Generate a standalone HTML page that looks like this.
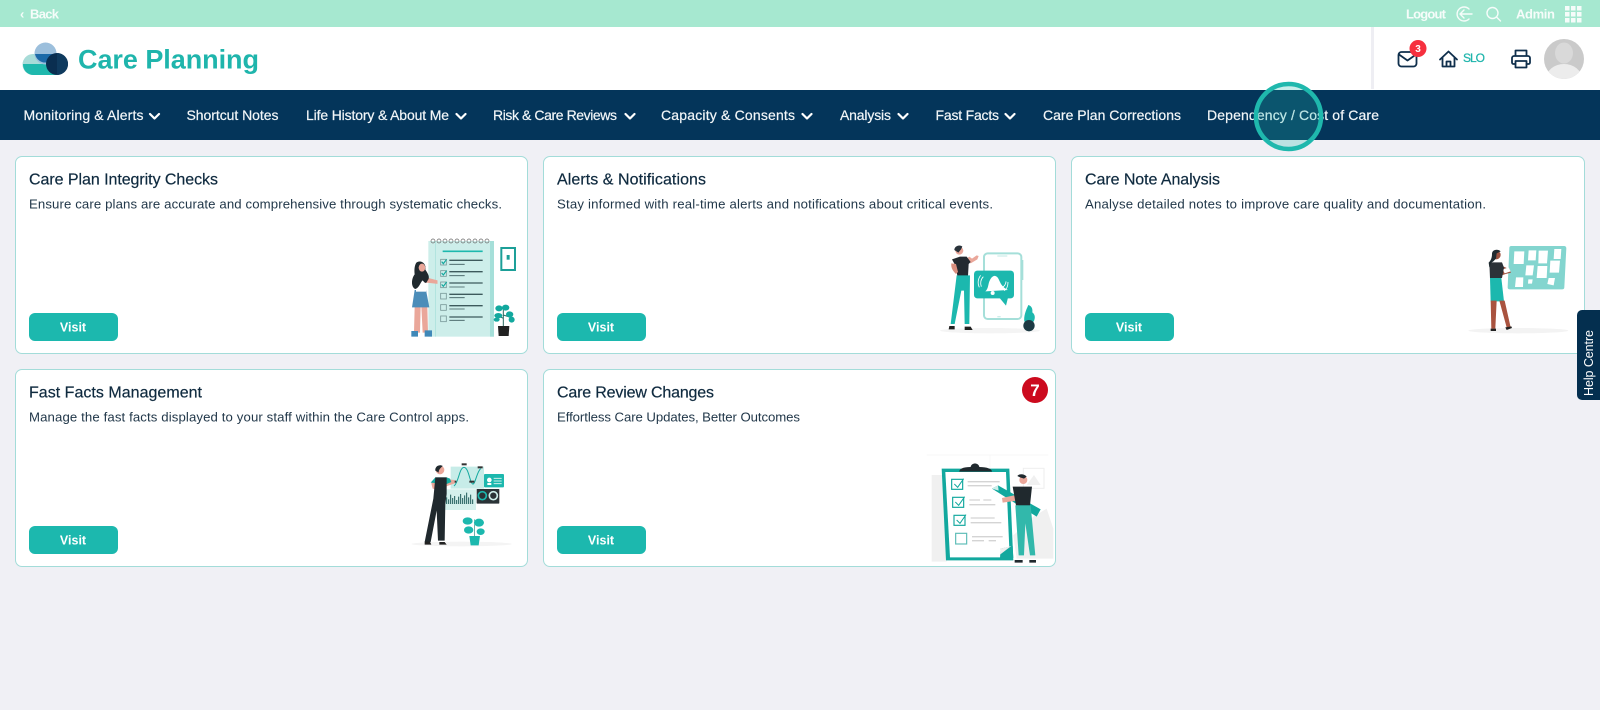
<!DOCTYPE html>
<html lang="en"><head><meta charset="utf-8"><title>Care Planning</title>
<style>
html,body{margin:0;padding:0;width:1600px;height:710px;overflow:hidden;background:#f0f0f5;font-family:"Liberation Sans",sans-serif}
.b{position:absolute}
.card{position:absolute;box-sizing:border-box;background:#fff;border:1px solid #a3dcd9;border-radius:7px}
.btn{position:absolute;width:89px;height:28px;background:#1cb8ae;border-radius:6px}
svg.o{position:absolute;left:0;top:0}
text{font-family:"Liberation Sans",sans-serif}
.nav{font-size:14px;fill:#f2f6f8;stroke:#f2f6f8;stroke-width:.2px}
.t{font-size:16px;fill:#0f2a3f;stroke:#0f2a3f;stroke-width:.2px}
.d{font-size:13.2px;fill:#22384a}
.v{font-size:12.5px;font-weight:700;fill:#fff}
.top{font-size:13px;font-weight:700;fill:#fff;opacity:.9}
</style></head><body>
<div class="b" style="left:0;top:0;width:1600px;height:27px;background:#a6e8d0"></div>
<div class="b" style="left:0;top:27px;width:1600px;height:63px;background:#fff"></div>
<div class="b" style="left:1371px;top:27px;width:3px;height:62px;background:#eeeef3"></div>
<div class="b" style="left:0;top:90px;width:1600px;height:50px;background:#04355a"></div>
<div class="card" style="left:15px;top:156px;width:513px;height:198px"></div>
<div class="card" style="left:543px;top:156px;width:513px;height:198px"></div>
<div class="card" style="left:1071px;top:156px;width:514px;height:198px"></div>
<div class="card" style="left:15px;top:369px;width:513px;height:198px"></div>
<div class="card" style="left:543px;top:369px;width:513px;height:198px"></div>
<div class="btn" style="left:29px;top:313px"></div>
<div class="btn" style="left:557px;top:313px"></div>
<div class="btn" style="left:1085px;top:313px"></div>
<div class="btn" style="left:29px;top:526px"></div>
<div class="btn" style="left:557px;top:526px"></div>
<div class="b" style="left:1577px;top:310px;width:23px;height:90px;background:#042f4f;border-radius:5px 0 0 5px"></div>

<svg class="o" width="1600" height="710" viewBox="0 0 1600 710" xmlns="http://www.w3.org/2000/svg">
<!-- top bar -->
<text class="top" x="20" y="18.500">‹</text>
<text class="top" x="30" y="18.500" textLength="29" lengthAdjust="spacing">Back</text>
<text class="top" x="1406" y="18.500" textLength="40" lengthAdjust="spacing">Logout</text>
<g fill="none" stroke="#fff" stroke-width="1.400" opacity=".9" stroke-linecap="round" stroke-linejoin="round">
<path d="M1469 9a7 7 0 1 0 0 10"/><path d="M1472 14h-11M1464 10l-4 4 4 4"/>
<circle cx="1492.500" cy="13" r="5.500"/><path d="M1497 17.500l3.500 3.500"/></g>
<text class="top" x="1516" y="18.500" textLength="39" lengthAdjust="spacing">Admin</text>
<g fill="#fff" opacity=".9">
<rect x="1565" y="6" width="4.500" height="4.500"/><rect x="1571" y="6" width="4.500" height="4.500"/><rect x="1577" y="6" width="4.500" height="4.500"/>
<rect x="1565" y="12" width="4.500" height="4.500"/><rect x="1571" y="12" width="4.500" height="4.500"/><rect x="1577" y="12" width="4.500" height="4.500"/>
<rect x="1565" y="18" width="4.500" height="4.500"/><rect x="1571" y="18" width="4.500" height="4.500"/><rect x="1577" y="18" width="4.500" height="4.500"/>
</g>

<!-- logo -->
<path d="M33 54h16v21H33a10.500 10.500 0 0 1 0-21z" fill="#a8dcd8"/>
<path d="M23 64H56v11H33a10.500 10.500 0 0 1-10-11z" fill="#1fb8ad"/>
<circle cx="45.500" cy="53.500" r="11" fill="#9cbfdc"/>
<path d="M35 54h21a11 11 0 0 1-4 8.500h-8.500A11 11 0 0 1 35 54z" fill="#1c6aa8"/>
<circle cx="57" cy="64" r="11" fill="#0a2e50"/>
<path d="M57 53a11 11 0 0 1 0 22z" fill="#0f3a5e"/>
<text x="78" y="68.500" font-size="27" font-weight="700" fill="#1fb5ac" textLength="181" lengthAdjust="spacing">Care Planning</text>

<!-- header icons -->
<g fill="none" stroke="#0f2f4c" stroke-width="1.800" stroke-linecap="round" stroke-linejoin="round">
<rect x="1398.500" y="52" width="18" height="14.500" rx="3"/><path d="M1399 54.500l8.500 6 8.500-6"/>
<path d="M1440 59.500l8.500-8 8.500 8M1442.500 57.500v9h12v-9M1446.500 66.500v-5h4v5"/>
<path d="M1515.500 56v-5.500h11V56M1515.500 64h-2a1.500 1.500 0 0 1-1.500-1.500V58a2 2 0 0 1 2-2h14a2 2 0 0 1 2 2v4.500a1.500 1.500 0 0 1-1.500 1.500h-2"/><rect x="1515.500" y="61" width="11" height="6.500"/>
</g>
<circle cx="1418" cy="48.500" r="8.500" fill="#f6303f"/>
<text x="1418" y="52" font-size="10" font-weight="700" fill="#fff" text-anchor="middle">3</text>
<text x="1463" y="62" font-size="12" fill="#1fb5ac" stroke="#1fb5ac" stroke-width=".25" textLength="22" lengthAdjust="spacing">SLO</text>
<clipPath id="av"><circle cx="1564" cy="59" r="20"/></clipPath>
<circle cx="1564" cy="59" r="20" fill="#cacaca"/>
<g clip-path="url(#av)"><ellipse cx="1564" cy="53" rx="9" ry="10.500" fill="#d9d9d9"/><ellipse cx="1564" cy="79" rx="18" ry="15" fill="#ececec"/></g>

<!-- nav -->
<text class="nav" x="23.500" y="120" textLength="120" lengthAdjust="spacing">Monitoring &amp; Alerts</text>
<text class="nav" x="186.500" y="120" textLength="92" lengthAdjust="spacing">Shortcut Notes</text>
<text class="nav" x="306" y="120" textLength="143" lengthAdjust="spacing">Life History &amp; About Me</text>
<text class="nav" x="493" y="120" textLength="124" lengthAdjust="spacing">Risk &amp; Care Reviews</text>
<text class="nav" x="661" y="120" textLength="134" lengthAdjust="spacing">Capacity &amp; Consents</text>
<text class="nav" x="840" y="120" textLength="51" lengthAdjust="spacing">Analysis</text>
<text class="nav" x="935.500" y="120" textLength="63.500" lengthAdjust="spacing">Fast Facts</text>
<text class="nav" x="1043" y="120" textLength="138" lengthAdjust="spacing">Care Plan Corrections</text>
<text class="nav" x="1207" y="120" textLength="172" lengthAdjust="spacing">Dependency / Cost of Care</text>
<g fill="none" stroke="#fff" stroke-width="2.200" stroke-linecap="round" stroke-linejoin="round">
<path d="M150 114l4.500 4.500 4.500-4.500M456.500 114l4.500 4.500 4.500-4.500M625.500 114l4.500 4.500 4.500-4.500M802.500 114l4.500 4.500 4.500-4.500M898.500 114l4.500 4.500 4.500-4.500M1005.500 114l4.500 4.500 4.500-4.500"/></g>
<circle cx="1288.500" cy="116.500" r="32.500" fill="rgba(31,184,173,.25)" stroke="#1fb8ad" stroke-width="4.500"/>

<!-- card text -->
<text class="t" x="29" y="184.500" textLength="189" lengthAdjust="spacing">Care Plan Integrity Checks</text>
<text class="d" x="29" y="208.500" textLength="473" lengthAdjust="spacing">Ensure care plans are accurate and comprehensive through systematic checks.</text>
<text class="v" x="73" y="331.500" text-anchor="middle">Visit</text>
<text class="t" x="557" y="184.500" textLength="149" lengthAdjust="spacing">Alerts &amp; Notifications</text>
<text class="d" x="557" y="208.500" textLength="436" lengthAdjust="spacing">Stay informed with real-time alerts and notifications about critical events.</text>
<text class="v" x="601" y="331.500" text-anchor="middle">Visit</text>
<text class="t" x="1085" y="184.500" textLength="135" lengthAdjust="spacing">Care Note Analysis</text>
<text class="d" x="1085" y="208.500" textLength="401" lengthAdjust="spacing">Analyse detailed notes to improve care quality and documentation.</text>
<text class="v" x="1129" y="331.500" text-anchor="middle">Visit</text>
<text class="t" x="29" y="397.500" textLength="173" lengthAdjust="spacing">Fast Facts Management</text>
<text class="d" x="29" y="421.500" textLength="440" lengthAdjust="spacing">Manage the fast facts displayed to your staff within the Care Control apps.</text>
<text class="v" x="73" y="544.500" text-anchor="middle">Visit</text>
<text class="t" x="557" y="397.500" textLength="157" lengthAdjust="spacing">Care Review Changes</text>
<text class="d" x="557" y="421.500" textLength="243" lengthAdjust="spacing">Effortless Care Updates, Better Outcomes</text>
<text class="v" x="601" y="544.500" text-anchor="middle">Visit</text>
<circle cx="1035" cy="390" r="13" fill="#cc0a1e"/>
<text x="1035" y="396" font-size="17" font-weight="700" fill="#fff" text-anchor="middle">7</text>
<text transform="translate(1593,396) rotate(-90)" font-size="12.500" fill="#fff" textLength="66" lengthAdjust="spacing">Help Centre</text>

<!-- illustration 1 -->
<g transform="translate(390,225) scale(.3333)">
<rect x="115" y="48" width="197" height="287" fill="#cdeeea"/><rect x="300" y="48" width="12" height="287" fill="#a5dfd9"/>
<path d="M136 48v287" stroke="#a5dfd9" stroke-width="2"/>
<g fill="none" stroke="#666" stroke-width="2"><circle cx="129" cy="48" r="6"/><circle cx="147" cy="48" r="6"/><circle cx="165" cy="48" r="6"/><circle cx="183" cy="48" r="6"/><circle cx="201" cy="48" r="6"/><circle cx="219" cy="48" r="6"/><circle cx="237" cy="48" r="6"/><circle cx="255" cy="48" r="6"/><circle cx="273" cy="48" r="6"/><circle cx="291" cy="48" r="6"/></g>
<path d="M158 79h120" stroke="#1cb8ae" stroke-width="5"/>
<g fill="none" stroke="#7a9a9a" stroke-width="2.500">
<rect x="152" y="103" width="17" height="17"/><rect x="152" y="137" width="17" height="17"/><rect x="152" y="171" width="17" height="17"/><rect x="152" y="205" width="17" height="17"/><rect x="152" y="239" width="17" height="17"/><rect x="152" y="273" width="17" height="17"/></g>
<path d="M155 110l5 6 10-13M155 144l5 6 10-13M155 178l5 6 10-13" fill="none" stroke="#12a89e" stroke-width="3.500"/>
<g stroke="#3d5a5c" stroke-width="4"><path d="M178 106h100M178 140h100M178 174h100M178 208h100M178 242h100M178 276h100"/></g>
<g stroke="#3d5a5c" stroke-width="2.500"><path d="M178 118h46M178 152h46M178 186h46M178 218h46M178 252h46M178 286h46"/></g>
<rect x="334" y="69" width="41" height="66" fill="#fff" stroke="#1c9f98" stroke-width="6"/><rect x="350" y="90" width="9" height="14" fill="#1c9f98"/>
<path d="M340 304v-50M340 280l-20-10M340 270l24 8" stroke="#2a6a60" stroke-width="3" fill="none"/>
<g fill="#12a89e"><ellipse cx="327" cy="250" rx="11" ry="9"/><ellipse cx="347" cy="248" rx="11" ry="9"/><ellipse cx="325" cy="272" rx="12" ry="8"/><ellipse cx="359" cy="268" rx="11" ry="9"/><ellipse cx="365" cy="284" rx="9" ry="9"/><ellipse cx="320" cy="284" rx="9" ry="6"/></g>
<path d="M324 303h34l-2 30h-30z" fill="#222"/>
<!-- person -->
<path d="M74 245h18l-2 78H72zM94 245h18l2 78h-16z" fill="#eaa79a"/>
<path d="M64 318h20v17H64zM104 316h22v19h-22z" fill="#3f88b8"/>
<path d="M74 195h34l10 52H66z" fill="#4b8db9"/>
<path d="M78 150h30v50H78z" fill="#fff"/>
<path d="M106 170l34 4v-6l-30-8z" stroke="#eaa79a" stroke-width="5" fill="#eaa79a"/>
<path d="M80 112c14-8 30 4 26 22 8 12 16 24 6 34-4 12-10 2-14-2-6 4-10 22-22 26-14-6-12-32-2-44-2-14 0-30 6-36z" fill="#20292e"/>
<ellipse cx="96" cy="128" rx="10" ry="12" fill="#eaa79a"/>
</g>

<!-- illustration 2 -->
<g transform="translate(920,230) scale(.3333)">
<ellipse cx="210" cy="302" rx="150" ry="8" fill="#f4f4f4"/>
<rect x="192" y="70" width="112" height="197" rx="11" fill="#fff" stroke="#a5dfd9" stroke-width="6"/>
<path d="M308 90v60" stroke="#a5dfd9" stroke-width="4"/>
<path d="M232 78h30M232 260h10" stroke="#cdeeea" stroke-width="4"/>
<rect x="162" y="122" width="120" height="83" rx="10" fill="#1cb8ae"/><path d="M238 203h26l-6 24z" fill="#1cb8ae"/>
<path d="M196 184c10-8 8-24 14-34 4-8 10-14 16-12 8 2 10 10 14 18 4 10 14 20 24 24z" fill="#fff"/><circle cx="218" cy="189" r="6" fill="#fff"/>
<g fill="none" stroke="#fff" stroke-width="2.500"><path d="M190 140c-8 8-10 20-6 30M182 136c-8 10-10 24-4 36M246 172c8-2 12-12 12-18M252 182c8-4 12-14 12-26"/></g>
<path d="M140 86l12 14 20-12 4-10-6-2-14 10-8-6z" fill="#eaa79a"/>
<path d="M96 88l24-8h20l12 16-6 6-2 36h-32L108 110z" fill="#232a30"/>
<path d="M94 100c-2 14 6 24 14 32l6-6-6-24z" fill="#d98f7f"/>
<path d="M110 136h40l-2 146h-14l-2-100-8 0-20 100H92z" fill="#1cb8ae"/>
<circle cx="118" cy="62" r="12" fill="#eaa79a"/><path d="M103 60c0-12 16-18 24-10l-4 8-8 10z" fill="#29323a"/>
<path d="M88 288h16v10H86zM134 290h18l6 10h-24z" fill="#222"/>
<path d="M325 225c8 2 14 10 12 22 8 6 10 16 4 28h-28c-2-18 4-32 12-50z" fill="#1cb8ae"/><circle cx="327" cy="287" r="17" fill="#1d3a44"/>
</g>

<!-- illustration 3 -->
<g transform="translate(1450,230) scale(.3333)">
<ellipse cx="205" cy="302" rx="150" ry="8" fill="#f3f3f3"/>
<path d="M184 48h158q7 0 7 7l-6 117q0 6-7 6H180q-7 0-7-6l5-118q0-6 6-6z" fill="#83d5cf"/>
<g fill="#fff"><path d="M193 64h30l-2 38h-30zM236 61h23l-2 30h-23zM266 62h28l-3 38h-26zM313 57h21l-2 30h-21zM229 106h23l-4 30h-22zM263 108h29l-2 36h-30zM301 92h29l-3 36h-28zM198 142h22l-1 29h-24zM235 148h13l-2 13h-12zM296 144h19l-4 22-19-4z"/></g>
<path d="M145 115l16-5 18 8 4 10-16 4-12 4z" fill="#9b5240"/><path d="M158 118l18-6 6 12-18 6z" fill="#fff"/>
<path d="M118 97h38l6 16-6 31h-36z" fill="#2c3238"/>
<path d="M120 144h34l8 70h-40z" fill="#1cb8ae"/>
<path d="M122 212h18l-4 84h-12zM148 212h16l18 80h-12z" fill="#a9533f"/>
<path d="M122 296h16v7h-16zM166 292l18-3 2 5-16 6z" fill="#222"/>
<circle cx="139" cy="75" r="13" fill="#9b5240"/><path d="M126 72c0-14 18-16 26-8l-12 6-2 16-8 8-6 4-6 14-2-14c6-6 10-14 10-26z" fill="#1f2a30"/>
</g>

<!-- illustration 4 -->
<g transform="translate(410,450) scale(.3333)">
<ellipse cx="155" cy="282" rx="150" ry="7" fill="#f4f4f4"/>
<path d="M122 50h100v66h-100z" fill="#c7ece8"/>
<path d="M132 108c14-10 16-56 30-56s18 48 26 50 12-36 24-46" fill="none" stroke="#12a89e" stroke-width="3"/>
<rect x="155" y="40" width="15" height="6" fill="#333"/><rect x="203" y="49" width="15" height="6" fill="#333"/><rect x="178" y="92" width="15" height="6" fill="#333"/><rect x="124" y="92" width="15" height="6" fill="#333"/>
<rect x="222" y="72" width="60" height="40" rx="3" fill="#1cb8ae"/><circle cx="238" cy="90" r="7" fill="#fff"/><rect x="232" y="99" width="12" height="6" fill="#fff"/><path d="M251 85h24M251 93h24M251 101h24" stroke="#cdeeea" stroke-width="3"/>
<rect x="105" y="118" width="93" height="62" fill="#d4f0ec"/>
<path d="M110 162v-20M116 162v-14M122 162v-28M128 162v-18M134 162v-24M140 162v-12M146 162v-22M152 162v-30M158 162v-18M164 162v-26M170 162v-34M176 162v-20M182 162v-28M188 162v-14" stroke="#1d5a58" stroke-width="3"/>
<rect x="200" y="117" width="68" height="44" rx="2" fill="#2a3337"/><circle cx="217" cy="137" r="12" fill="none" stroke="#1cb8ae" stroke-width="5"/><circle cx="250" cy="137" r="12" fill="none" stroke="#cdeeea" stroke-width="5"/>
<path d="M194 268v-60" stroke="#2a8a80" stroke-width="2"/>
<g fill="#1cb8ae"><ellipse cx="173" cy="213" rx="15" ry="11"/><ellipse cx="207" cy="218" rx="15" ry="12"/><ellipse cx="176" cy="240" rx="14" ry="11"/><ellipse cx="212" cy="245" rx="12" ry="10"/></g>
<path d="M178 258h32l-4 28h-24z" fill="#1cb8ae"/>
<path d="M64 100l14-12 36 0 20 2v10l-22 8-26 12-18-4z" fill="#eaa79a"/>
<path d="M62 98l14-16h34l10 4 4 10-14 6z" fill="#12a89e"/>
<path d="M76 82h34v50l-4 30-2 110H84l-4-90-18 94H44l26-130z" fill="#20292e"/>
<circle cx="90" cy="60" r="13" fill="#eaa79a"/><path d="M76 62c-2-14 14-20 22-14-6 6-12 10-12 20z" fill="#20292e"/>
<path d="M44 275h16l4 9H44zM88 276h16l6 8H88z" fill="#222"/>
</g>

<!-- illustration 5 -->
<g transform="translate(920,370) scale(.3333)">
<rect x="35" y="315" width="45" height="260" fill="#f0f0f0"/><rect x="310" y="295" width="62" height="60" fill="#fff" stroke="#eee" stroke-width="3"/><path d="M320 345l22-30 20 30z" fill="#f0f0f0"/>
<path d="M340 440l40-24 20 60v90h-110l-10-70z" fill="#f0f0f0"/>
<path d="M20 255h365M210 255v60" stroke="#f5f5f5" stroke-width="2"/>
<path d="M65 296h203l12 275H78z" fill="#12a89e"/>
<path d="M76 306h182l10 230-27 26H90z" fill="#fff"/>
<path d="M118 305c0-8 10-14 34-14 2-14 24-14 26 0 24 0 38 6 38 14z" fill="#20292e"/>
<g fill="none" stroke="#12a89e" stroke-width="3.500"><rect x="95" y="328" width="33" height="30"/><rect x="98" y="382" width="33" height="30"/><rect x="102" y="436" width="33" height="30"/><rect x="107" y="490" width="33" height="32" stroke="#5cbcb6"/></g>
<path d="M103 342l10 10 18-26M106 396l10 10 18-26M110 450l10 10 18-26" fill="none" stroke="#12a89e" stroke-width="3"/>
<g stroke="#d4d4d4" stroke-width="4"><path d="M143 335h96M143 347h72M148 390h32M190 390h24M148 404h78M152 444h72M152 458h92M156 500h92M156 512h36M206 512h22"/></g>
<path d="M242 536l36-8 2 36h-40z" fill="#12a89e"/><path d="M242 536l32-8-34 26z" fill="#eee"/>
<path d="M216 356l18-10 128 72-12 22z" fill="#12a89e"/><path d="M216 356l18-10 2 16z" fill="#cdeeea"/>
<path d="M246 384l36-8 8 8v8l-42 6z" fill="#eaa79a"/>
<path d="M278 350h58l-6 56h-42z" fill="#20292e"/>
<path d="M286 406h46l14 150h-16l-14-96-4 96h-16z" fill="#32b8ab"/>
<circle cx="310" cy="330" r="12" fill="#eaa79a"/><path d="M292 318c6-8 22-6 28 2l-8 6-12-4z" fill="#20292e"/>
<path d="M284 570h24v8h-24zM328 570h20v8h-20z" fill="#20292e"/>
</g>
</svg>
</body></html>
